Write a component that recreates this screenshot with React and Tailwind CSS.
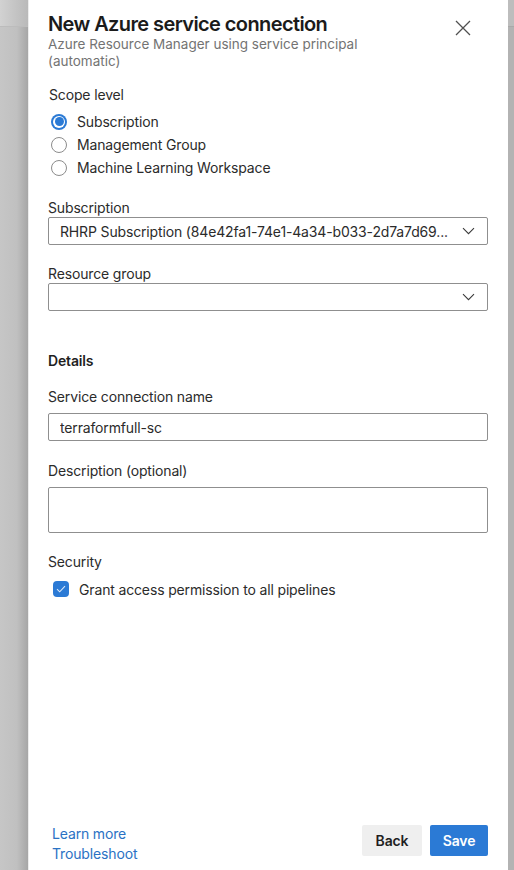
import React, { useState } from "react";

function Chevron() {
  return (
    <svg width="13" height="8" viewBox="0 0 13 8" fill="none">
      <path d="M1 1.2l5.5 5.5L12 1.2" stroke="#3b3b3b" strokeWidth="1.1" />
    </svg>
  );
}

function Radio({ checked, label, onClick }) {
  return (
    <div className="flex items-center h-[23px] pl-[3px] cursor-pointer" onClick={onClick}>
      {checked ? (
        <span className="w-[16px] h-[16px] rounded-full bg-[#2b7ad5] flex items-center justify-center">
          <span className="w-[12px] h-[12px] rounded-full bg-white flex items-center justify-center">
            <span className="w-[9px] h-[9px] rounded-full bg-[#2b7ad5]" />
          </span>
        </span>
      ) : (
        <span className="w-[16px] h-[16px] rounded-full border border-[#8c8c8c] bg-white" />
      )}
      <span className="ml-[10px] text-[14px] text-[#2b2b2b]">{label}</span>
    </div>
  );
}

function SelectBox({ value }) {
  return (
    <div className="h-[28px] border border-[#8f8f8f] rounded-[2px] flex items-center justify-between pl-[11px] pr-[12px]">
      <span className="text-[14px] text-[#2b2b2b] truncate">{value}</span>
      <Chevron />
    </div>
  );
}

export default function App() {
  const [scope, setScope] = useState("sub");
  const [name, setName] = useState("terraformfull-sc");

  return (
    <div className="flex w-full h-[870px] font-['Inter',sans-serif] antialiased tracking-[-0.15px]">
      <div className="w-[28px] flex flex-col">
        <div className="h-[27px] bg-[linear-gradient(to_right,#d2d2d2,#b9b9b9)] border-b border-[#bcbcbc]" />
        <div className="flex-1 bg-[linear-gradient(to_right,#c6c6c6_0%,#c0c0c0_60%,#a6a6a6_100%)]" />
      </div>
      <div className="flex-1 bg-white border-l border-[#ececec] flex flex-col pl-[19px] pr-[20px] pt-[12px]">
        <div className="flex justify-between">
          <div>
            <h1 className="text-[20px] leading-[24px] font-semibold text-[#1b1b1b] tracking-[-0.6px]">
              New Azure service connection
            </h1>
            <p className="text-[13.5px] leading-[17px] text-[#737373] w-[330px] tracking-[0px]">
              Azure Resource Manager using service principal (automatic)
            </p>
          </div>
          <button className="w-[24px] h-[24px] mt-[4px] mr-[13px] flex items-center justify-center">
            <svg width="16" height="16" viewBox="0 0 16 16" fill="none">
              <path d="M1 1l14 14M15 1L1 15" stroke="#505050" strokeWidth="1.3" />
            </svg>
          </button>
        </div>

        <div className="mt-[15px] text-[14px] leading-[20px] text-[#2b2b2b] pl-[1px]">Scope level</div>
        <div className="mt-[5px] flex flex-col">
          <Radio checked={scope === "sub"} label="Subscription" onClick={() => setScope("sub")} />
          <Radio checked={scope === "mg"} label="Management Group" onClick={() => setScope("mg")} />
          <Radio checked={scope === "ml"} label="Machine Learning Workspace" onClick={() => setScope("ml")} />
        </div>

        <div className="mt-[20px] text-[14px] leading-[18px] text-[#2b2b2b]">Subscription</div>
        <SelectBox value="RHRP Subscription (84e42fa1-74e1-4a34-b033-2d7a7d69..." />

        <div className="mt-[20px] text-[14px] leading-[18px] text-[#2b2b2b]">Resource group</div>
        <SelectBox value="" />

        <div className="mt-[40px] text-[14px] leading-[20px] font-semibold text-[#1f1f1f]">Details</div>

        <div className="mt-[16px] text-[14px] leading-[20px] text-[#2b2b2b]">Service connection name</div>
        <input
          className="mt-[6px] h-[28px] border border-[#8f8f8f] rounded-[2px] px-[11px] text-[14px] text-[#2b2b2b] outline-none"
          value={name}
          onChange={(e) => setName(e.target.value)}
        />

        <div className="mt-[20px] text-[14px] leading-[20px] text-[#2b2b2b]">Description (optional)</div>
        <textarea className="mt-[6px] h-[46px] border border-[#8f8f8f] rounded-[2px] px-[11px] py-[4px] text-[14px] resize-none outline-none" />

        <div className="mt-[19px] text-[14px] leading-[20px] text-[#2b2b2b]">Security</div>
        <div className="mt-[5px] flex items-center h-[24px] pl-[5px]">
          <span className="w-[16px] h-[16px] rounded-[4px] bg-[#2b7ad5] flex items-center justify-center">
            <svg width="10" height="8" viewBox="0 0 10 8" fill="none">
              <path d="M1 4.2l2.7 2.6L9 1.2" stroke="#dbe9fa" strokeWidth="1.1" />
            </svg>
          </span>
          <span className="ml-[10px] text-[14px] text-[#2b2b2b]">Grant access permission to all pipelines</span>
        </div>

        <div className="mt-auto flex justify-between items-start pb-[6px]">
          <div className="flex flex-col pl-[4px] text-[14px] leading-[20px] text-[#2a72c4]">
            <a href="#">Learn more</a>
            <a href="#">Troubleshoot</a>
          </div>
          <div className="flex gap-[8px] mt-[1px]">
            <button className="h-[31px] w-[60px] rounded-[2px] bg-[#efefef] text-[14px] font-semibold text-[#1f1f1f]">
              Back
            </button>
            <button className="h-[31px] w-[58px] rounded-[2px] bg-[#2b7ad5] text-[14px] font-semibold text-white">
              Save
            </button>
          </div>
        </div>
      </div>
      <div className="w-[6px] flex flex-col">
        <div className="h-[27px] bg-[#bdbdbd] border-b border-[#a9a9a9]" />
        <div className="flex-1 bg-[#b3b3b3]" />
      </div>
    </div>
  );
}
